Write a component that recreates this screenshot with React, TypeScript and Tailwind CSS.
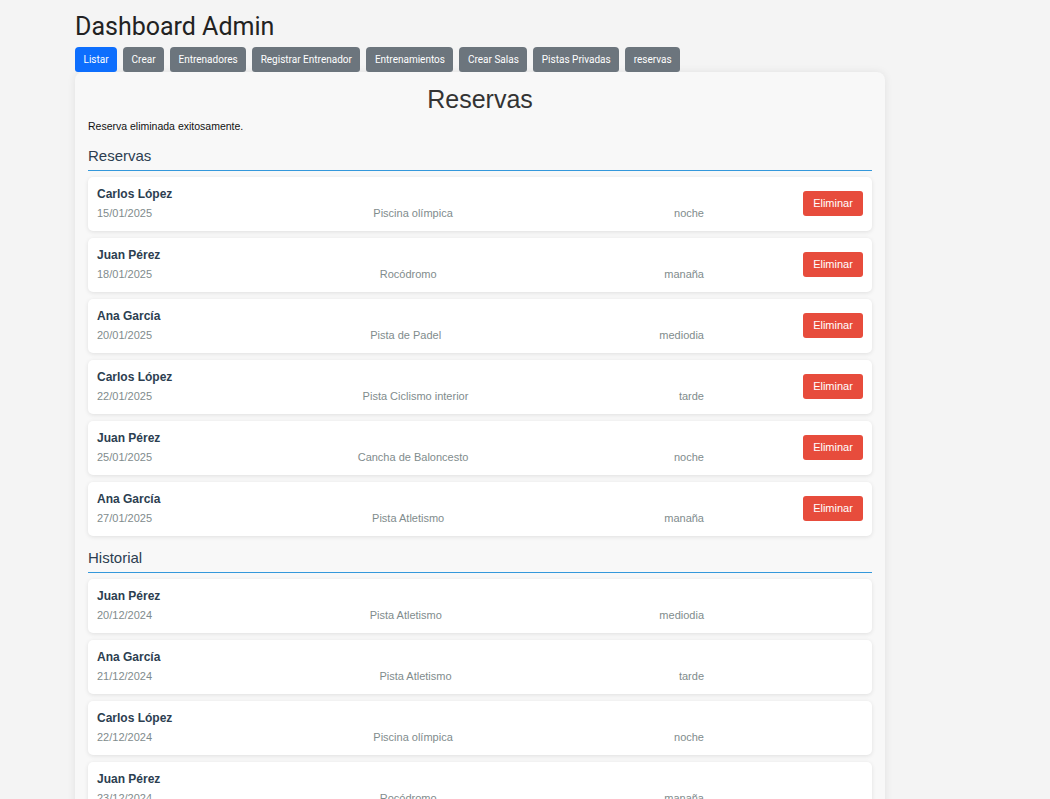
import React from "react";

type R = { name: string; date: string; place: string; time: string };

const reservas: R[] = [
  { name: "Carlos López", date: "15/01/2025", place: "Piscina olímpica", time: "noche" },
  { name: "Juan Pérez", date: "18/01/2025", place: "Rocódromo", time: "manaña" },
  { name: "Ana García", date: "20/01/2025", place: "Pista de Padel", time: "mediodia" },
  { name: "Carlos López", date: "22/01/2025", place: "Pista Ciclismo interior", time: "tarde" },
  { name: "Juan Pérez", date: "25/01/2025", place: "Cancha de Baloncesto", time: "noche" },
  { name: "Ana García", date: "27/01/2025", place: "Pista Atletismo", time: "manaña" },
];

const historial: R[] = [
  { name: "Juan Pérez", date: "20/12/2024", place: "Pista Atletismo", time: "mediodia" },
  { name: "Ana García", date: "21/12/2024", place: "Pista Atletismo", time: "tarde" },
  { name: "Carlos López", date: "22/12/2024", place: "Piscina olímpica", time: "noche" },
  { name: "Juan Pérez", date: "23/12/2024", place: "Rocódromo", time: "manaña" },
];

const navs = ["Listar", "Crear", "Entrenadores", "Registrar Entrenador", "Entrenamientos", "Crear Salas", "Pistas Privadas", "reservas"];

function Card({ r, button }: { r: R; button: boolean }) {
  return (
    <div className="flex items-center bg-white rounded-[5px] shadow-[0_1px_4px_rgba(0,0,0,0.1)] pl-[9px] pr-[9px] pt-[10px] pb-[11px] mb-[7px]">
      <div className="w-[607px] flex flex-col">
        <div className="h-[15px] leading-[15px] text-[12px] font-bold text-[#2c3e50]">{r.name}</div>
        <div className="mt-[4px] h-[14px] leading-[14px] text-[11px] text-[#7f8c8d] flex justify-between">
          <span>{r.date}</span>
          <span>{r.place}</span>
          <span>{r.time}</span>
        </div>
      </div>
      {button && (
        <button className="ml-auto w-[60px] h-[25px] rounded-[3px] bg-[#e74c3c] text-white text-[11px] leading-[25px] text-center">
          Eliminar
        </button>
      )}
    </div>
  );
}

function Section({ title, items, button, mt }: { title: string; items: R[]; button: boolean; mt: string }) {
  return (
    <div>
      <h2 className={`${mt} text-[15px] leading-[19px] text-[#2c3e50] pb-[5px] border-b border-[#3498db] mb-[6px]`}>{title}</h2>
      {items.map((r, i) => (
        <Card key={i} r={r} button={button} />
      ))}
    </div>
  );
}

export default function App() {
  return (
    <div className="min-h-[799px] h-[799px] overflow-hidden bg-[#f4f4f4] font-['Liberation_Sans',Arial,sans-serif]">
      <div className="ml-[75px] w-[810px]">
        <h1 className="pt-[12px] h-[47px] font-['Roboto',sans-serif] text-[25px] leading-[30px] text-[#222]">Dashboard Admin</h1>
        <div className="flex gap-[6px] h-[25px]">
          {navs.map((n, i) => (
            <div
              key={n}
              className={`${i === 0 ? "bg-[#0d6efd]" : "bg-[#6c757d]"} h-[25px] px-[8.5px] rounded-t-[4px] rounded-b-[3px] text-white text-[10px] leading-[25px] font-['Roboto',sans-serif] font-normal`}
            >
              {n}
            </div>
          ))}
        </div>
        <div className="bg-[#f8f8f8] rounded-[8px] shadow-[0_0_8px_rgba(0,0,0,0.08)] px-[13px] pt-[12px] pb-[10px]">
          <div className="text-center text-[25px] leading-[30px] text-[#333]">Reservas</div>
          <div className="mt-[6px] text-[10.5px] leading-[13px] text-[#111]">Reserva eliminada exitosamente.</div>
          <Section title="Reservas" items={reservas} button={true} mt="mt-[13px]" />
          <Section title="Historial" items={historial} button={false} mt="mt-[12px]" />
        </div>
      </div>
    </div>
  );
}
